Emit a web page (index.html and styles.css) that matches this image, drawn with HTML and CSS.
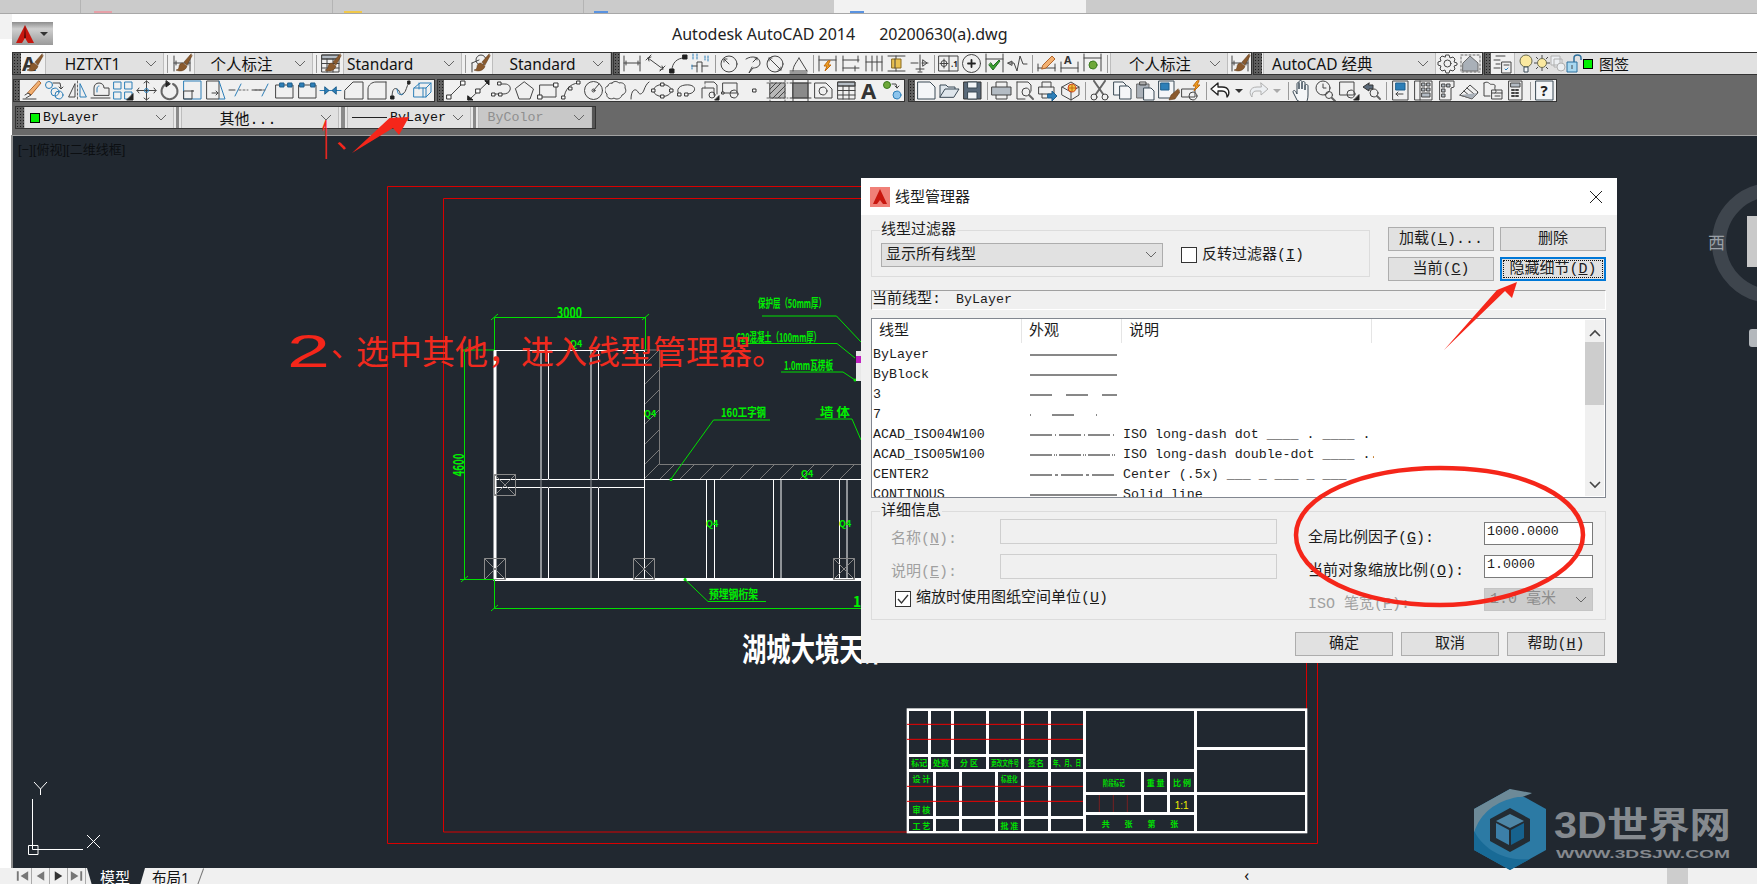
FILE: index.html
```html
<!DOCTYPE html>
<html lang="zh">
<head>
<meta charset="utf-8">
<title>Autodesk AutoCAD 2014</title>
<link rel="stylesheet" href="styles.css">
</head>
<body>
<svg class="defs" aria-hidden="true">
  <symbol id="brush" viewBox="0 0 23 21"><path class="brn" d="M21 1l-7 8 3 3 5-9zM13 10c-3 0-4 2-4 4s-2 3-3 3c4 2 10 1 11-4z"/></symbol>
  <symbol id="chev" viewBox="0 0 12 8"><path d="M1 1l5 5 5-5"/></symbol>
  <symbol id="dl" viewBox="0 0 23 21"><path d="M4 3v15M20 3v15M4 10h16M6 8v4M18 8v4"/></symbol>
  <symbol id="da" viewBox="0 0 23 21"><path d="M8 2L3 7M22 13l-5 5M5 5l15 11M8 4l-3 1 1 3M17 17l3-1-1-3"/></symbol>
  <symbol id="dr" viewBox="0 0 23 21"><path d="M6 17C6 10 11 5 18 5"/><path class="fk" d="M4 16h4v4H4zM17 2h4v4h-4z"/></symbol>
  <symbol id="do" viewBox="0 0 23 21"><path d="M8 19V9h5v10M13 13h6M8 13H3"/><path class="blu" d="M4 1v6M8 1v6M3 12v4M19 3v6M16 3v4" stroke-dasharray="2 1"/></symbol>
  <symbol id="dc1" viewBox="0 0 23 21"><circle cx="11" cy="11" r="8"/><path d="M11 11L6 6M6 9V6h3"/></symbol>
  <symbol id="dc2" viewBox="0 0 23 21"><path d="M5 6c6-4 14-2 14 4 0 3-3 5-7 5l-4 5 3-6"/><path d="M12 9l4-4M14 5h2v2"/></symbol>
  <symbol id="dc3" viewBox="0 0 23 21"><circle cx="11" cy="11" r="8"/><path d="M5 5l12 12M5 8V5h3M17 14v3h-3"/></symbol>
  <symbol id="dc4" viewBox="0 0 23 21"><path d="M3 18h17M6 18c0-5 3-8 6-13M12 5l8 13M3 20h17"/></symbol>
  <symbol id="dq" viewBox="0 0 23 21"><path d="M3 3v15M20 3v15M3 7h17"/><path class="org" d="M12 8l-4 5h3l-2 5 6-6h-3l2-4z"/></symbol>
  <symbol id="db" viewBox="0 0 23 21"><path d="M4 3v15M4 7h16M4 15h16M19 3v6M16 13v5"/></symbol>
  <symbol id="dc" viewBox="0 0 23 21"><path d="M4 3v15M10 3v15M15 3v15M20 3v15M4 9h16"/></symbol>
  <symbol id="ds" viewBox="0 0 23 21"><path d="M3 3h17M3 18h17M11 3v15"/><path class="ylw" d="M7 6h9v9H7z"/><path d="M10 6v9"/></symbol>
  <symbol id="dk" viewBox="0 0 23 21"><path d="M12 2v16M3 10h7M14 10h6M15 7l4 3-4 3zM8 16h8M10 19h4"/></symbol>
  <symbol id="tol" viewBox="0 0 23 21"><path d="M2 3h19v15H2zM12 3v15"/><circle cx="7" cy="10.5" r="3"/><path d="M7 6v9M3 10.500h8"/><text class="tiny" x="14" y="14">.1</text></symbol>
  <symbol id="cen" viewBox="0 0 23 21"><circle cx="11.500" cy="10.500" r="9"/><path class="thk" d="M11.500 7v7M8 10.500h7"/></symbol>
  <symbol id="ins" viewBox="0 0 23 21"><path d="M3 1v18M20 1v18M3 6h17"/><path class="grn" d="M6 12l4 5 7-9-1-1-6 6-2-3z"/></symbol>
  <symbol id="jog" viewBox="0 0 23 21"><path d="M2 10h6l3 8 3-15 3 8h4M2 10l4-2v4z"/></symbol>
  <symbol id="ded" viewBox="0 0 23 21"><path d="M3 11v7M20 11v7M3 15h17"/><path class="org2" d="M8 12l9-9 3 3-9 9-4 1z"/></symbol>
  <symbol id="dtx" viewBox="0 0 23 21"><text class="mid" x="6" y="11">A</text><path d="M3 9v10M20 9v10M3 15h17"/></symbol>
  <symbol id="dup" viewBox="0 0 23 21"><path d="M3 1v17M20 1v17M3 5h17"/><circle class="grnl" cx="12" cy="12" r="4"/></symbol>
  <symbol id="gear" viewBox="0 0 23 21"><circle cx="11.500" cy="10.500" r="3.500"/><path d="M10 2h3l1 3 3-1 2 2-1 3 3 1v2l-3 1 1 3-2 2-3-1-1 3h-3l-1-3-3 1-2-2 1-3-3-1V9l3-1-1-3 2-2 3 1z"/></symbol>
  <symbol id="house" viewBox="0 0 23 21"><path class="dash" d="M2 2h19v17H2z"/><path class="gry" d="M4 10l7-7 8 7v8H4z"/></symbol>
  <symbol id="wsp" viewBox="0 0 23 21"><path d="M11 9h9v11h-9zM13 12h5M5 3h9M3 7h6M5 11h4M3 15h6"/><path class="blu" d="M17 15l-2 2-1-1"/></symbol>

  <symbol id="ed" viewBox="0 0 23 21"><path class="org2" d="M19 1l2 2-10 12-3-2z"/><path d="M3 19h13M5 15l3-2 3 2-5 3"/></symbol>
  <symbol id="cp" viewBox="0 0 23 21"><circle class="blu" cx="6" cy="5" r="3.500"/><circle class="blu" cx="16" cy="15" r="4"/><circle cx="12" cy="12" r="4" class="blu"/><path d="M10 3h7l1 5M16 7l2 2 2-2"/></symbol>
  <symbol id="mi" viewBox="0 0 23 21"><path d="M11.500 1v19" class="dash"/><path d="M9 4v13H3z"/><path class="blu" d="M14 4v13h6z"/></symbol>
  <symbol id="of" viewBox="0 0 23 21"><path d="M5 15V8c0-3 2-5 5-5s5 2 5 5h5v7z"/><path class="blu" d="M8 12V9c0-2 1-3 2-3"/><path d="M2 18h19"/></symbol>
  <symbol id="ar" viewBox="0 0 23 21"><path class="blu" d="M2 2h7v7H2zM13 2h7v7h-7zM2 12h7v7H2zM13 12h7v7h-7z"/><path class="fk" d="M21 14v6h-6z"/></symbol>
  <symbol id="mv" viewBox="0 0 23 21"><path d="M11.500 1v19M2 10.500h19M9 3l2.500-2L14 3M9 18l2.500 2 2.500-2M4 8l-2 2.500L4 13M19 8l2 2.500L19 13"/><circle class="blu" cx="11.500" cy="10.500" r="2"/></symbol>
  <symbol id="ro" viewBox="0 0 23 21"><path class="thk2" d="M15 4a8 8 0 1 1-7 0"/><path class="fk" d="M8 1v6l4-3z"/></symbol>
  <symbol id="sc" viewBox="0 0 23 21"><path class="blu" d="M3 1h17v18H3z"/><path d="M3 11h8v8H3z"/><path class="thk2" d="M11 11h1"/></symbol>
  <symbol id="st" viewBox="0 0 23 21"><path d="M3 1h12v18H3z"/><path class="blu" d="M15 1l6 18h-6"/><path d="M8 13h6M12 11l2 2-2 2"/></symbol>
  <symbol id="tr" viewBox="0 0 23 21"><path class="blu" d="M8 16L14 4"/><path d="M2 10h6"/><path class="dash" d="M12 10h9"/></symbol>
  <symbol id="ex" viewBox="0 0 23 21"><path class="blu" d="M12 16L18 4"/><path d="M12 10H2"/><path class="dash" d="M5 10h11"/></symbol>
  <symbol id="bp" viewBox="0 0 23 21"><path d="M3 5h17v13H3z"/><path class="bluf" d="M7 3h4v4H7zM15 3h4v4h-4z"/></symbol>
  <symbol id="bb" viewBox="0 0 23 21"><path d="M3 5h17v13H3z"/><path class="bluf" d="M4 3h4v4H4zM15 3h4v4h-4z"/></symbol>
  <symbol id="jn" viewBox="0 0 23 21"><path class="blu" d="M1 10.500h21"/><path class="bluf" d="M6 7l4 3.500L6 14zM17 7l-4 3.500 4 3.500z"/></symbol>
  <symbol id="ch" viewBox="0 0 23 21"><path d="M3 19h18V2H11L3 10z"/></symbol>
  <symbol id="fl" viewBox="0 0 23 21"><path d="M3 19V9c0-4 4-7 8-7h10"/><path d="M3 19h18V2"/></symbol>
  <symbol id="bl" viewBox="0 0 23 21"><path d="M4 18c0-6 1-11 5-9s2 8 6 5 3-8 6-11"/><path class="blu" d="M9 9c1 3 0 7 6 5"/><path class="fk" d="M3 16h3v3H3zM20 1h2v3h-2z"/></symbol>
  <symbol id="xp" viewBox="0 0 23 21"><path class="blu" d="M3 8l6-5h11v9l-5 5H3zM3 8h12v9M15 8l5-5M8 3v6M12 8v9"/></symbol>

  <symbol id="ln" viewBox="0 0 23 21"><path d="M5 17L19 3"/><path class="wb" d="M3 15h4v4H3zM17 1h4v4h-4z"/></symbol>
  <symbol id="xl" viewBox="0 0 23 21"><path d="M3 19L21 2M2 20l2-2M21 1l-2 2"/><path class="wb" d="M9 9h4v4H9z"/><path class="fk" d="M1 16l5 4-5 0zM22 0v5l-4-4z"/></symbol>
  <symbol id="pl" viewBox="0 0 23 21"><path d="M11 4h4c4 0 6 3 5 6s-4 4-7 4H5"/><path class="wb" d="M8 2h3v3H8zM2 13h3v3H2zM9 13h3v3H9z"/></symbol>
  <symbol id="pg" viewBox="0 0 23 21"><path d="M11.500 2l9 7-3.500 10H6L2.500 9z"/></symbol>
  <symbol id="rc" viewBox="0 0 23 21"><path d="M4 5h16v12H4z"/><path class="wb" d="M2 15h4v4H2zM18 3h4v4h-4z"/></symbol>
  <symbol id="ac" viewBox="0 0 23 21"><path d="M5 18C6 9 11 4 19 3"/><path class="wb" d="M3 16h3v3H3zM10 7h3v3h-3zM18 1h3v3h-3z"/></symbol>
  <symbol id="ci" viewBox="0 0 23 21"><circle cx="11.500" cy="10.500" r="9"/><circle cx="11.500" cy="10.500" r="1.500"/><path d="M11.500 10.500L17 4"/></symbol>
  <symbol id="cl" viewBox="0 0 23 21"><path d="M7 3c3-3 6-1 7 0 3-1 7 1 6 5 2 3 0 6-3 7-1 4-6 5-8 3-3 2-8 0-7-4-3-2-3-7 1-8 0-2 2-3 4-3z"/></symbol>
  <symbol id="sp" viewBox="0 0 23 21"><path d="M3 19C3 9 8 8 10 12s5 1 6-2 3-7 5-8"/></symbol>
  <symbol id="el" viewBox="0 0 23 21"><ellipse cx="11.500" cy="10.500" rx="9" ry="6"/><path class="wb" d="M1 9h3v3H1zM19 9h3v3h-3zM10 3h3v3h-3zM10 15h3v3h-3z"/></symbol>
  <symbol id="ea" viewBox="0 0 23 21"><path d="M6 15C2 12 3 6 11 5s11 3 9 6-6 3-8 3"/><path class="wb" d="M4 13h3v3H4zM11 13h3v3h-3z"/></symbol>
  <symbol id="ib" viewBox="0 0 23 21"><path d="M8 2h9l3 3v9M5 18V8h12v7"/><path class="dash" d="M8 2v6"/><circle cx="15" cy="15" r="3"/><path class="fk" d="M18 20h4v-4z"/></symbol>
  <symbol id="mb" viewBox="0 0 23 21"><path d="M3 3h14v10H3z"/><circle cx="14" cy="14" r="4"/><path class="wb" d="M2 12h2v2H2z"/></symbol>
  <symbol id="pt" viewBox="0 0 23 21"><path class="wb" d="M10 9h3v3h-3z"/></symbol>
  <symbol id="ht" viewBox="0 0 23 21"><path class="hat" d="M4 3h15v15H4z"/><path class="dash" d="M1 3h21M1 18h21M4 0v21M19 0v21"/><path d="M4 9l6-6M4 14l11-11M7 18L19 6M12 18l7-7"/></symbol>
  <symbol id="gr" viewBox="0 0 23 21"><path class="grd" d="M4 3h15v15H4z"/><path d="M1 3h21M1 18h21M4 0v21M19 0v21"/></symbol>
  <symbol id="rg" viewBox="0 0 23 21"><path d="M3 3h11l6 6v9H3z"/><circle cx="11" cy="11" r="4"/></symbol>
  <symbol id="tb" viewBox="0 0 23 21"><path class="hd" d="M3 2h17v4H3z"/><path d="M3 2h17v17H3zM3 6h17M3 10.500h17M3 15h17M8 6v13M14 6v13"/></symbol>
  <symbol id="mt" viewBox="0 0 23 21"><text class="big" x="3" y="19">A</text></symbol>
  <symbol id="ao" viewBox="0 0 23 21"><circle class="grnl" cx="6" cy="5" r="3.500"/><circle class="bluc" cx="16" cy="15" r="4"/><path d="M11 4h4l1 4M14 6l2 2 2-2"/></symbol>

  <symbol id="nw" viewBox="0 0 23 21"><path class="wbl" d="M3 2h12l5 5v12H3z"/></symbol>
  <symbol id="op" viewBox="0 0 23 21"><path class="fldr" d="M2 17V5h6l2 2h7v3"/><path class="fldr" d="M2 17l5-8h14l-5 8z"/></symbol>
  <symbol id="sv" viewBox="0 0 23 21"><path class="slate" d="M3 2h17v17H3z"/><path class="wbl" d="M7 2h9v6H7zM7 12h9v7H7z"/></symbol>
  <symbol id="pr" viewBox="0 0 23 21"><path d="M6 7V2h11v5M6 15v4h11v-4"/><path class="hd" d="M2 7h19v8H2z"/></symbol>
  <symbol id="pv" viewBox="0 0 23 21"><path d="M4 2h11l3 3v6M4 2v17h8"/><circle cx="13" cy="12" r="4"/><path class="thk2" d="M16 15l4 4"/></symbol>
  <symbol id="pb" viewBox="0 0 23 21"><path d="M6 7V2h9v5M3 7h15v7H3zM6 14v4h5"/><path class="bluf" d="M12 14h4v-3l5 5-5 5v-3h-4z"/></symbol>
  <symbol id="td" viewBox="0 0 23 21"><path d="M3 7l9-5 8 5v8l-8 5-9-5zM12 20v-8M3 7l9 5 8-5"/><circle class="ylws" cx="13" cy="8" r="4"/><path class="org" d="M13 5v6M10 8h6"/></symbol>
  <symbol id="ct" viewBox="0 0 23 21"><path class="thk2" d="M6 1l9 13M17 1L8 14"/><circle cx="6" cy="17" r="3"/><circle cx="17" cy="17" r="3"/></symbol>
  <symbol id="cy" viewBox="0 0 23 21"><path class="wbl" d="M3 2h9l3 3v10H3z"/><path class="wbl" d="M9 6h8l3 3v10H9z"/></symbol>
  <symbol id="pa" viewBox="0 0 23 21"><path class="gry" d="M3 4h12v14H3z"/><path d="M6 2h6v3H6z"/><path class="wbl" d="M10 8h7l3 3v9H10z"/></symbol>
  <symbol id="mp" viewBox="0 0 23 21"><path class="wbl" d="M2 1h15v17H2z"/><path class="bluf" d="M4 3h8v7H4z"/><path class="brn" d="M21 9l-7 6-2 5 6-1 5-7z"/></symbol>
  <symbol id="be" viewBox="0 0 23 21"><path d="M2 9h13v8H2z"/><circle cx="13" cy="16" r="4"/><path class="org" d="M17 1l-4 5h3l-2 5 6-6h-3l2-4z"/></symbol>
  <symbol id="ud" viewBox="0 0 23 21"><path class="thk1" d="M9 3L2 9l7 6v-4h4c3 0 5 1 5 6 3-3 3-10-5-10H9z"/></symbol>
  <symbol id="rd" viewBox="0 0 23 21"><path class="pale" d="M14 3l7 6-7 6v-4h-4c-3 0-5 1-5 6-3-3-3-10 5-10h4z"/></symbol>
  <symbol id="pn" viewBox="0 0 23 21"><path class="wbl" d="M6 20L2 12c0-2 2-2 3 0l1 2V4c0-2 2-2 2 0v5-7c0-2 3-2 3 0v7-6c0-2 3-2 3 0v7-4c0-2 3-2 3 0v9c0 4-1 7-3 9z"/></symbol>
  <symbol id="zr" viewBox="0 0 23 21"><circle cx="9" cy="8" r="7"/><path d="M9 4v4h3M13 13l-2 2"/><circle cx="15" cy="15" r="3.500"/><path class="thk2" d="M18 18l3 3"/></symbol>
  <symbol id="zw" viewBox="0 0 23 21"><path d="M3 2h14v13H3z"/><circle cx="14" cy="14" r="4"/><path class="fk" d="M17 20h5v-5z"/></symbol>
  <symbol id="zp" viewBox="0 0 23 21"><path class="slate" d="M9 3L3 7l6 4V9h4V5H9z"/><circle cx="14" cy="13" r="4"/><path class="thk2" d="M17 16l3 3"/></symbol>
  <symbol id="pp" viewBox="0 0 23 21"><path d="M4 1h15v19H4z"/><path class="bluf" d="M7 3h9v7H7z"/><path d="M14 14H7M9 12l-2 2 2 2"/></symbol>
  <symbol id="dgn" viewBox="0 0 23 21"><path d="M3 1h17v19H3zM8 1v19"/><path class="hd" d="M10 3h3v3h-3zM15 3h3v3h-3zM10 8h3v3h-3zM15 8h3v3h-3zM10 13h8v4h-8z"/></symbol>
  <symbol id="tp" viewBox="0 0 23 21"><path d="M5 1h14v6l-3 1v12H5z"/><path class="hd" d="M7 4h3v3H7zM12 4h3v3h-3zM7 9h3v3H7zM7 14h3v3H7z"/></symbol>
  <symbol id="ss" viewBox="0 0 23 21"><path d="M2 15L12 5l8 7-6 6zM6 11l7 6M9 8l7 6"/><path class="gry" d="M2 15l12 4 6-6"/></symbol>
  <symbol id="mk" viewBox="0 0 23 21"><path d="M3 3c3-2 5 0 6 1s6-1 5 3 3 3 0 6M3 3v13h6"/><path d="M11 10h10v9H11zM11 13h10M14 16h5"/></symbol>
  <symbol id="cc" viewBox="0 0 23 21"><path d="M5 1h13v19H5z"/><path class="hd" d="M7 3h9v4H7z"/><path class="dashb" d="M8 10h8M8 13h8M8 16h8"/></symbol>
  <symbol id="hp" viewBox="0 0 23 21"><path class="wbl" d="M3 1h17v19H3z"/><text class="q" x="7.500" y="16">?</text></symbol>

  <symbol id="bulb" viewBox="0 0 16 21"><circle class="ylwl" cx="8" cy="8" r="6"/><path class="wbl" d="M6 14h4v5H6z"/></symbol>
  <symbol id="sun" viewBox="0 0 16 21"><circle class="ylwl" cx="8" cy="10" r="4.500"/><path d="M8 2v3M8 15v3M0 10h3M13 10h3M2 4l2 2M12 14l2 2M14 4l-2 2M2 16l2-2"/></symbol>
  <symbol id="fz" viewBox="0 0 16 21"><path class="pale" d="M1 3h9v9H1zM4 6h8v8H4z"/><circle class="pale" cx="11" cy="14" r="4"/></symbol>
  <symbol id="lock" viewBox="0 0 16 21"><path class="lkb" d="M1 9h10v10H1z"/><path class="blu2" d="M8 9V5c0-4 7-4 7 0v2"/><path d="M6 12v4"/></symbol>
</svg>

<div class="strip">
  <div class="tab t1"><i class="favi pink"></i><span>搜索结果</span></div>
  <div class="tab t2"><i class="favi gold"></i><span>【帖子】线型比例设置方法</span></div>
  <div class="tab t3"><i class="favi sky"></i><span>全局比例因子怎么设置</span></div>
  <div class="tab t4 on"><i class="favi sky"></i><span>如何设置全局比例因子</span></div>
</div>

<div class="app">
  <header class="titlebar">
    <button class="appbtn" type="button">
      <svg class="applogo" viewBox="0 0 20 20"><path class="logo-a" d="M10 1L1 19h6l3-5 3 5h6z"/><path class="logo-b" d="M10 1l-1 13h2z"/></svg>
      <i class="caret"></i>
    </button>
    <div class="apptitle"><span>Autodesk AutoCAD 2014</span><span>20200630(a).dwg</span></div>
  </header>

  <div class="bars">
    <div class="row">
      <div class="tbar first">
        <i class="grip wide"></i>
        <svg class="ic"><text class="big dk" x="1" y="18">A</text><use href="#brush"/></svg>
        <div class="combo w119 left1"><span class="ctr">HZTXT1</span><svg class="chev"><use href="#chev"/></svg></div>
        <i class="sep"></i>
        <svg class="ic"><use href="#dl" /><use href="#brush"/></svg>
        <div class="combo w119 left1"><span class="ctr">个人标注</span><svg class="chev"><use href="#chev"/></svg></div>
        <i class="sep"></i>
        <svg class="ic"><use href="#tb"/><use href="#brush"/></svg>
        <div class="combo w119 left1"><span class="lft">Standard</span><svg class="chev"><use href="#chev"/></svg></div>
        <i class="sep"></i>
        <svg class="ic"><circle cx="13" cy="7" r="5"/><path d="M4 10l7-3M4 10v9"/><use href="#brush"/></svg>
        <div class="combo w119 left1"><span class="ctr r0">Standard</span><svg class="chev"><use href="#chev"/></svg></div>
      </div>
      <div class="tbar">
        <i class="grip"></i>
        <svg class="ic"><use href="#dl"/></svg><svg class="ic"><use href="#da"/></svg><svg class="ic"><use href="#dr"/></svg><svg class="ic"><use href="#do"/></svg>
        <i class="sep"></i>
        <svg class="ic"><use href="#dc1"/></svg><svg class="ic"><use href="#dc2"/></svg><svg class="ic"><use href="#dc3"/></svg><svg class="ic"><use href="#dc4"/></svg>
        <i class="sep"></i>
        <svg class="ic"><use href="#dq"/></svg><svg class="ic"><use href="#db"/></svg><svg class="ic"><use href="#dc"/></svg><svg class="ic"><use href="#ds"/></svg><svg class="ic"><use href="#dk"/></svg>
        <i class="sep"></i>
        <svg class="ic"><use href="#tol"/></svg><svg class="ic"><use href="#cen"/></svg><svg class="ic"><use href="#ins"/></svg><svg class="ic"><use href="#jog"/></svg>
        <i class="sep"></i>
        <svg class="ic"><use href="#ded"/></svg><svg class="ic"><use href="#dtx"/></svg><svg class="ic"><use href="#dup"/></svg>
        <i class="sep"></i>
        <div class="combo w118"><span class="ctr r0">个人标注</span><svg class="chev"><use href="#chev"/></svg></div>
        <svg class="ic"><use href="#dl"/><use href="#brush"/></svg>
      </div>
      <div class="tbar">
        <i class="grip wide"></i>
        <div class="combo w173 left1"><span class="lft wk">AutoCAD 经典</span><svg class="chev"><use href="#chev"/></svg></div>
        <svg class="ic"><use href="#gear"/></svg><svg class="ic"><use href="#house"/></svg>
      </div>
      <div class="tbar grow">
        <i class="grip"></i>
        <svg class="ic"><use href="#wsp"/></svg>
        <div class="layer">
          <svg class="ic16"><use href="#bulb"/></svg><svg class="ic16"><use href="#sun"/></svg><svg class="ic16"><use href="#fz"/></svg><svg class="ic16"><use href="#lock"/></svg>
          <i class="swatch"></i><span class="layname">图签</span>
        </div>
      </div>
    </div>

    <div class="row r2">
      <div class="tbar">
        <i class="grip"></i>
        <svg class="ic"><use href="#ed"/></svg><svg class="ic"><use href="#cp"/></svg><svg class="ic"><use href="#mi"/></svg><svg class="ic"><use href="#of"/></svg><svg class="ic"><use href="#ar"/></svg><svg class="ic"><use href="#mv"/></svg><svg class="ic"><use href="#ro"/></svg><svg class="ic"><use href="#sc"/></svg><svg class="ic"><use href="#st"/></svg><svg class="ic"><use href="#tr"/></svg><svg class="ic"><use href="#ex"/></svg><svg class="ic"><use href="#bp"/></svg><svg class="ic"><use href="#bb"/></svg><svg class="ic"><use href="#jn"/></svg><svg class="ic"><use href="#ch"/></svg><svg class="ic"><use href="#fl"/></svg><svg class="ic"><use href="#bl"/></svg><svg class="ic"><use href="#xp"/></svg>
      </div>
      <div class="tbar gap2">
        <i class="grip"></i>
        <svg class="ic"><use href="#ln"/></svg><svg class="ic"><use href="#xl"/></svg><svg class="ic"><use href="#pl"/></svg><svg class="ic"><use href="#pg"/></svg><svg class="ic"><use href="#rc"/></svg><svg class="ic"><use href="#ac"/></svg><svg class="ic"><use href="#ci"/></svg><svg class="ic"><use href="#cl"/></svg><svg class="ic"><use href="#sp"/></svg><svg class="ic"><use href="#el"/></svg><svg class="ic"><use href="#ea"/></svg><svg class="ic"><use href="#ib"/></svg><svg class="ic"><use href="#mb"/></svg><svg class="ic"><use href="#pt"/></svg><svg class="ic"><use href="#ht"/></svg><svg class="ic"><use href="#gr"/></svg><svg class="ic"><use href="#rg"/></svg><svg class="ic"><use href="#tb"/></svg><svg class="ic"><use href="#mt"/></svg><svg class="ic"><use href="#ao"/></svg>
      </div>
      <div class="tbar gap3">
        <i class="grip"></i>
        <svg class="ic"><use href="#nw"/></svg><svg class="ic"><use href="#op"/></svg><svg class="ic"><use href="#sv"/></svg>
        <i class="sep"></i>
        <svg class="ic"><use href="#pr"/></svg><svg class="ic"><use href="#pv"/></svg><svg class="ic"><use href="#pb"/></svg><svg class="ic"><use href="#td"/></svg>
        <i class="sep"></i>
        <svg class="ic"><use href="#ct"/></svg><svg class="ic"><use href="#cy"/></svg><svg class="ic"><use href="#pa"/></svg><svg class="ic"><use href="#mp"/></svg><svg class="ic"><use href="#be"/></svg>
        <i class="sep"></i>
        <svg class="ic"><use href="#ud"/></svg><i class="dd"></i><svg class="ic"><use href="#rd"/></svg><i class="dd off"></i>
        <i class="sep"></i>
        <svg class="ic"><use href="#pn"/></svg><svg class="ic"><use href="#zr"/></svg><svg class="ic"><use href="#zw"/></svg><svg class="ic"><use href="#zp"/></svg>
        <i class="sep"></i>
        <svg class="ic"><use href="#pp"/></svg><svg class="ic"><use href="#dgn"/></svg><svg class="ic"><use href="#tp"/></svg><svg class="ic"><use href="#ss"/></svg><svg class="ic"><use href="#mk"/></svg><svg class="ic"><use href="#cc"/></svg>
        <i class="sep"></i>
        <svg class="ic"><use href="#hp"/></svg>
      </div>
    </div>

    <div class="row r3">
      <div class="tbar props">
        <i class="grip wide2"></i>
        <div class="combo mono w150"><i class="swatch sw2"></i><span class="lft tight">ByLayer</span><svg class="chev"><use href="#chev"/></svg></div>
        <i class="pgap g7"></i>
        <div class="combo mono w158"><span class="ctr cjk15">其他...</span><svg class="chev"><use href="#chev"/></svg></div>
        <i class="pgap g8"></i>
        <div class="combo mono w123"><i class="lwline"></i><span class="lft">ByLayer</span><svg class="chev"><use href="#chev"/></svg></div>
        <i class="pgap g7"></i>
        <div class="combo mono w114 dis"><span class="lft pad9">ByColor</span><svg class="chev"><use href="#chev"/></svg></div>
      </div>
    </div>
  </div>

  <main class="canvas">
    <div class="viewlabel">[−][俯视][二维线框]</div>
    <svg class="drawing" viewBox="13 136 1744 732">
      <g class="red1">
        <path d="M387.500 186.500H1317.500V843.500H387.500z"/>
        <path d="M443.500 198.500H1306.500V832H443.500z"/>
      </g>
      <g class="hatch">
        <path d="M659.500 350V464.500H861M644 350h15.500"/>
        <path d="M644 365l15-15M644 385l15-15M644 405l15-15M644 425l15-15M644 445l15-15M644 465l15-15M644 479l15-15M660 479l15-15M680 479l15-15M700 479l15-15M720 479l15-15M740 479l15-15M760 479l15-15M780 479l15-15M800 479l15-15M820 479l15-15M840 479l15-15"/>
      </g>
      <g class="wht">
        <path d="M494 350.500H644.500V579M541 350V579M548.500 350V579M591 350V579M598.500 350V579M644 479.500H861M494 479.500h150M494 487.500H644M706.500 479V579M714.500 479V579M773.500 479V579M781 479V579M839.500 479V579M847 479V579"/>
      </g>
      <path class="wht3" d="M495 350V579.500H861"/>
      <path class="wht-mask" d="M541 479.500v8M548.500 479.500v8M591 479.500v8M598.500 479.500v8"/>
      <g class="col">
        <path d="M494.500 474.500H515.500V495.500H494.500zM494.500 474.500l21 21M515.500 474.500l-21 21"/>
        <path d="M484.500 558.500H505.500V579.500H484.500zM484.500 558.500l21 21M505.500 558.500l-21 21"/>
        <path d="M633.500 558.500H654.500V579.500H633.500zM633.500 558.500l21 21M654.500 558.500l-21 21"/>
        <path d="M833.500 558.500H854.500V579.500H833.500zM833.500 558.500l21 21M854.500 558.500l-21 21"/>
      </g>
      <g class="grn-l">
        <path d="M494.500 317.500H645.500M494.500 317.500V350M645.500 317V350M491 320l7-6M642 320l7-6"/>
        <path d="M464.500 350V579M460 350h34M460 579.500h34M461 353l7-6M461 582l7-6"/>
        <path d="M494.500 580V608.500H861M491 611l7-6"/>
        <path d="M762 316H836.500L861 342M742 343.500H837L855 358M781 372H843L855 380M713.500 420H770M713.500 420L671 479M815.500 419H852L861 440M708 601.500H766M708 601.500L685 579.500"/>
      </g>
      <path class="dots" d="M671 479.500h.1M685 579.500h.1M855 380h.1"/>
      <rect class="strip-w" x="856" y="351" width="5" height="30"/>
      <rect class="strip-m" x="856" y="356" width="5" height="7"/>
      <g class="lab">
        <text x="557" y="318" class="l14" textLength="25" lengthAdjust="spacingAndGlyphs">3000</text>
        <text class="l14" text-anchor="middle" transform="translate(464 465) rotate(-90) scale(.7 1)">4600</text>
        <text x="758" y="308" textLength="68" lengthAdjust="spacingAndGlyphs">保护层（50mm厚）</text>
        <text x="736" y="342" textLength="85" lengthAdjust="spacingAndGlyphs">C20混凝土（100mm厚）</text>
        <text x="784" y="370" textLength="49" lengthAdjust="spacingAndGlyphs">1.0mm瓦楞板</text>
        <text x="721" y="417" textLength="45" lengthAdjust="spacingAndGlyphs">160工字钢</text>
        <text x="820" y="417" textLength="30" lengthAdjust="spacingAndGlyphs">墙 体</text>
        <text x="709" y="599" textLength="49" lengthAdjust="spacingAndGlyphs">预埋钢桁架</text>
        <text x="570" y="347" class="s">Q4</text>
        <text x="801" y="477" class="s">Q4</text>
        <text x="706" y="527" class="s">Q4</text>
        <text x="839" y="527" class="s">Q4</text>
        <text class="s" transform="translate(644 417)">Q4</text>
        <text x="853" y="607" class="l14">1</text>
      </g>
      <text class="bigtitle" x="742" y="661" textLength="146" lengthAdjust="spacingAndGlyphs">湖城大境天第</text>

      <g transform="translate(880 690) scale(.33333)">
        <rect class="tb-w" x="80" y="55" width="1202" height="375"/>
        <path class="tb-c" d="M87 63H144V192H87zM153 63H213V192H153zM222 63H318V192H222zM327 63H423V192H327zM432 63H504V192H432zM513 63H609V192H513zM87 201H144V237H87zM153 201H213V237H153zM222 201H318V237H222zM327 201H423V237H327zM432 201H504V237H432zM513 201H609V237H513zM618 63H942V237H618zM87 246H159V378H87zM168 246H237V378H168zM246 246H345V378H246zM354 246H423V378H354zM432 246H504V378H432zM513 246H609V378H513zM87 387H159V423H87zM168 387H237V423H168zM246 387H345V423H246zM354 387H423V423H354zM432 387H504V423H432zM513 387H609V423H513zM618 246H783V306H618zM792 246H861V306H792zM870 246H942V306H870zM618 315H783V366H618zM792 315H861V366H792zM870 315H942V366H870zM618 375H942V423H618zM951 63H1275V171H951zM951 180H1275V306H951zM951 315H1275V423H951z"/>
        <path class="tb-r" d="M81 103H609M81 148H609M81 289H609M81 334H609"/>
        <path class="tb-d" d="M658 315V366M700 315V366M742 315V366"/>
        <g class="tb-t">
          <text x="118" y="228">标记</text><text x="183" y="228">处数</text><text x="267" y="228">分 区</text><text x="375" y="228" textLength="84" lengthAdjust="spacingAndGlyphs">更改文件号</text><text x="468" y="228">签名</text><text x="561" y="228" textLength="84" lengthAdjust="spacingAndGlyphs">年、月、日</text>
          <text x="124" y="276">设 计</text><text x="388" y="276" textLength="50" lengthAdjust="spacingAndGlyphs">标准化</text><text x="124" y="370">审 核</text><text x="124" y="416">工 艺</text><text x="388" y="416">批 准</text>
          <text x="701" y="287" textLength="66" lengthAdjust="spacingAndGlyphs">阶段标记</text><text x="827" y="287">重 量</text><text x="906" y="287">比 例</text>
          <text x="780" y="410" textLength="230">共  张  第  张</text>
        </g>
        <text class="tb-y" x="905" y="356">1:1</text>
      </g>

      <g class="ucs">
        <path d="M32.500 799V845M38 849.500H83M28.500 845.500H38V854.500H28.500zM32.500 845.500V849.500H38"/>
        <path d="M87 835l13 13M100 835l-13 13M34 782l6.500 7 6.500-7M40.500 789v6"/>
      </g>

      <circle class="ring" cx="1772" cy="243" r="53"/>
      <rect class="cube" x="1747" y="216" width="10" height="51"/>
      <text class="west" x="1708" y="249">西</text>
      <rect class="wcs" x="1749" y="329" width="12" height="18" rx="3"/>
    </svg>

    <section class="dialog" aria-label="线型管理器">
      <div class="dlg-title">
        <svg class="dlg-logo" viewBox="0 0 20 20"><rect class="logo-bg" width="20" height="20"/><path class="logo-a" d="M10 2L3 17h4l3-4 3 4h4z"/></svg>
        <span class="dlg-name">线型管理器</span>
        <svg class="dlg-x" viewBox="0 0 14 14"><path d="M1 1l12 12M13 1L1 13"/></svg>
      </div>
      <div class="dlg-body">
        <div class="top">
          <div class="group filter">
            <span class="legend">线型过滤器</span>
            <div class="select"><span>显示所有线型</span><svg class="chev"><use href="#chev"/></svg></div>
            <i class="check"></i><span class="chk-label">反转过滤器(<u>I</u>)</span>
          </div>
          <div class="btn-grid">
            <button class="btn" type="button">加载(<u>L</u>)...</button>
            <button class="btn" type="button">删除</button>
            <button class="btn" type="button">当前(<u>C</u>)</button>
            <button class="btn focus" type="button"><span>隐藏细节(<u>D</u>)</span></button>
          </div>
        </div>
        <div class="current"><span class="cj">当前线型:</span><span class="cv">ByLayer</span></div>
        <div class="list">
          <div class="list-main">
            <div class="lhead"><span class="h1">线型</span><span class="h2">外观</span><span class="h3">说明</span><span class="h4"></span></div>
            <div class="lrow"><span class="n">ByLayer</span><svg class="ls"><path d="M0 2h87"/></svg></div>
            <div class="lrow"><span class="n">ByBlock</span><svg class="ls"><path d="M0 2h87"/></svg></div>
            <div class="lrow"><span class="n">3</span><svg class="ls"><path class="d3" d="M0 2h87"/></svg></div>
            <div class="lrow"><span class="n">7</span><svg class="ls"><path class="d7" d="M0 2h87"/></svg></div>
            <div class="lrow"><span class="n">ACAD_ISO04W100</span><svg class="ls"><path class="d4" d="M0 2h87"/></svg><span class="d">ISO long-dash dot ____ . ____ .</span></div>
            <div class="lrow"><span class="n">ACAD_ISO05W100</span><svg class="ls"><path class="d5" d="M0 2h87"/></svg><span class="d">ISO long-dash double-dot ____ ..</span></div>
            <div class="lrow"><span class="n">CENTER2</span><svg class="ls"><path class="dc" d="M0 2h87"/></svg><span class="d">Center (.5x) ___ _ ___ _ ___ _</span></div>
            <div class="lrow"><span class="n">CONTINOUS</span><svg class="ls"><path d="M0 2h87"/></svg><span class="d">Solid line</span></div>
          </div>
          <div class="vscroll">
            <svg class="vs-a" viewBox="0 0 12 8"><path d="M1 7l5-5 5 5"/></svg>
            <i class="vs-t"></i>
            <svg class="vs-a end" viewBox="0 0 12 8"><path d="M1 1l5 5 5-5"/></svg>
          </div>
        </div>
        <div class="group details">
          <span class="legend">详细信息</span>
          <div class="d-left">
            <div class="f f-a"><label class="off">名称(<u>N</u>):</label><i class="inp-dis"></i></div>
            <div class="f f-b"><label class="off">说明(<u>E</u>):</label><i class="inp-dis"></i></div>
            <div class="chk-row"><i class="check on"><svg viewBox="0 0 14 14"><path d="M2 7l3.500 4L12 3"/></svg></i><span>缩放时使用图纸空间单位(<u>U</u>)</span></div>
          </div>
          <div class="d-right">
            <div class="f2"><label>全局比例因子(<u>G</u>):</label><span class="val">1000.0000</span></div>
            <div class="f2"><label>当前对象缩放比例(<u>O</u>):</label><span class="val">1.0000</span></div>
            <div class="f2"><label class="off">ISO 笔宽(<u>P</u>):</label><span class="val dis">1.0 毫米<svg class="chev"><use href="#chev"/></svg></span></div>
          </div>
        </div>
        <div class="foot">
          <button class="btn" type="button">确定</button>
          <button class="btn" type="button">取消</button>
          <button class="btn" type="button">帮助(<u>H</u>)</button>
        </div>
      </div>
    </section>
  </main>

  <footer class="tabbar">
    <div class="nav">
      <svg class="nb" viewBox="0 0 18 16"><path class="nb-d" d="M3 3h2v10H3zM15 3v10L7 8z"/></svg>
      <svg class="nb" viewBox="0 0 18 16"><path class="nb-d" d="M13 3v10L5 8z"/></svg>
      <svg class="nb" viewBox="0 0 18 16"><path class="nb-k" d="M5 3v10l8-5z"/></svg>
      <svg class="nb" viewBox="0 0 18 16"><path class="nb-d" d="M3 3v10l8-5zM13 3h2v10h-2z"/></svg>
    </div>
    <span class="mtab active">模型</span>
    <span class="mtab">布局1</span>
    <i class="tabslash"></i>
    <span class="sb-l">‹</span>
    <i class="sb-t"></i>
  </footer>
</div>

<svg class="overlay" viewBox="0 0 1757 884" aria-hidden="true">
  <path class="mark-f" d="M352 153L389.500 118 409 117 399 135 393 128z"/>
  <text class="hand" x="321" y="159" textLength="9" lengthAdjust="spacingAndGlyphs">1</text>
  <text class="hand-c" x="336" y="148">、</text>
  <path class="mark-f" d="M1444 350L1497 290 1517 282 1512 298 1505 291z"/>
  <text class="note2" x="287" y="367" textLength="43" lengthAdjust="spacingAndGlyphs">2</text>
  <text class="note3" x="331" y="356">、</text>
  <text class="note" x="356" y="364" textLength="429">选中其他，进入线型管理器。</text>
  <path class="mark-s" d="M1296 535C1296 495 1365 468 1440 468 1530 468 1583 500 1583 535 1583 575 1510 605 1440 605 1360 605 1296 575 1296 535z"/>

  <g class="wm">
    <path class="wm-a" d="M1510 789l36 20v41l-36 20-36-20v-41z"/>
    <path class="wm-b" d="M1510 789l-36 20v24c6-20 22-32 44-36 6 0 10-2 14-4z"/>
    <path class="wm-c" d="M1474 850l36 20 20-11c-22 2-44-6-56-28z"/>
    <path class="wm-d" d="M1510 808l20 11v22l-20 11-20-11v-22z"/>
    <path class="wm-e" d="M1510 814l14 7-14 7-14-7z"/>
    <path class="wm-f" d="M1496 823l13 7v15l-13-7z"/>
    <path class="wm-g" d="M1524 823l-13 7v15l13-7z"/>
    <text class="wm-t" x="1554" y="838" textLength="177" lengthAdjust="spacingAndGlyphs">3D世界网</text>
    <text class="wm-u" x="1556" y="858" textLength="174" lengthAdjust="spacingAndGlyphs">WWW.3DSJW.COM</text>
  </g>
</svg>
</body>
</html>
```

FILE: styles.css
```css
* { box-sizing: border-box; }
html, body { margin: 0; padding: 0; }
body {
  position: relative;
  width: 1757px;
  height: 884px;
  overflow: hidden;
  background: linear-gradient(#f2f2f2 39px, #fff 39px);
  font-family: "Noto Sans", "Noto Sans CJK SC", sans-serif;
  color: #111;
}
.defs { position: absolute; width: 0; height: 0; }

/* browser tab strip */
.strip { display: flex; height: 14px; background: #cbcbcb; border-bottom: 1px solid #a8a8a8; overflow: hidden; }
.tab { display: flex; align-items: flex-start; padding-top: 10px; border-left: 1px solid #b4b4b4; font-size: 14px; line-height: 20px; white-space: nowrap; color: #333; overflow: hidden; flex: none; }
.t1 { width: 252px; margin-left: 80px; padding-left: 13px; }
.t2 { width: 251px; padding-left: 11px; }
.t3 { width: 251px; padding-left: 10px; }
.t4 { width: 252px; padding-left: 16px; background: #f2f2f2; border-left: 0; }
.favi { width: 18px; height: 14px; margin: 1px 13px 0 0; flex: none; }
.t3 .favi, .t4 .favi { width: 14px; }
.t4 .favi { margin-right: 5px; }
.t3 .favi { margin-right: 22px; }
.t1 .favi { margin-right: 13px; }
.t2 .favi { margin-right: 21px; }
.pink { background: #e6a0a8; }
.gold { background: #f0c84a; }
.sky { background: #5a93e0; }

.app { margin-left: 12px; display: flex; flex-direction: column; height: 870px; }

/* title bar */
.titlebar { display: flex; height: 38px; background: #fff; flex: none; }
.appbtn { width: 41px; height: 23px; margin: 8px 0 0; padding: 0 0 0 3px; border: 0; background: linear-gradient(#8e8e8e, #cfcfcf 30%, #9a9a9a); display: flex; align-items: center; gap: 5px; }
.applogo { width: 20px; height: 20px; }
.logo-a { fill: #c8170f; }
.logo-b { fill: #5a0b08; }
.logo-bg { fill: #f08078; }
.caret { width: 0; height: 0; border: 4px solid transparent; border-top: 4px solid #333; border-bottom: 0; }
.apptitle { margin: 9px 0 0 619px; font-size: 16px; line-height: 22px; display: flex; gap: 24px; color: #222; }

/* toolbars */
.bars { background: #696969; flex: none; height: 83px; padding-bottom: 6px; border-bottom: 0; display: flex; flex-direction: column; gap: 4px; }
.row { display: flex; height: 23px; flex: none; }
.r2 { padding-left: 1px; }
.r3 { padding-left: 3px; }
.tbar { display: flex; align-items: center; height: 23px; border: 1px solid #333; background: #f0f0f0; flex: none; }
.tbar + .tbar { margin-left: 1px; }
.tbar.gap2 { margin-left: 2px; }
.tbar.gap3 { margin-left: 3px; }
.tbar.grow { flex: 1; border-right: 0; }
.first { border-left-width: 1px; }
.grip {
  width: 6px; height: 21px; flex: none;
  background: #5e5e5e radial-gradient(circle, #1c1c1c 0.7px, transparent 0.8px) 0 0 / 3px 3px;
}
.grip.wide { width: 8px; }
.grip.wide2 { width: 8px; }
.sep { width: 1px; height: 18px; margin: 0 2.5px; background: #9a9a9a; flex: none; }
.ic { width: 23px; height: 21px; flex: none; fill: none; stroke: #454545; stroke-width: 1; stroke-linejoin: round; stroke-linecap: round; }
.ic16 { width: 16px; height: 21px; flex: none; fill: none; stroke: #4a4a4a; stroke-width: 1; }
.combo { display: flex; align-items: center; height: 21px; background: #e1e1e1; border-left: 1px solid #bdbdbd; border-right: 1px solid #bdbdbd; font-size: 15.5px; flex: none; padding-right: 6px; color: #111; }
.w119 { width: 119px; }
.w118 { width: 118px; }
.w173 { width: 173px; }
.w150 { width: 150px; }
.w158 { width: 158px; }
.w123 { width: 123.5px; }
.w114 { width: 114.5px; }
.left1 { margin-left: 1px; }
.ctr { flex: 1; text-align: center; white-space: nowrap; padding-right: 6px; }
.ctr.r0 { padding-right: 0; }
.lft { flex: 1; padding-left: 3px; white-space: nowrap; }
.wk { padding-left: 8px; }
.tight { padding-left: 3px; }
.chev { width: 12px; height: 8px; flex: none; fill: none; stroke: #666; stroke-width: 1; }
.layer { flex: 1; display: flex; align-items: center; height: 21px; padding-left: 3px; background: #e1e1e1; border-left: 1px solid #bdbdbd; }
.swatch { width: 10px; height: 10px; background: #00f000; border: 1px solid #000; margin: 0 6px 0 1px; flex: none; }
.layname { font-size: 15px; }
.props { background: #555; width: 581px; }
.mono { font-family: "Liberation Mono", "Noto Sans CJK SC", monospace; font-size: 13.3px; }
.sw2 { margin: 0 0 0 5px; }
.cjk15 { font-size: 15px; }
.lwline { width: 35px; height: 1px; background: #222; margin-left: 4px; flex: none; }
.pgap { height: 21px; flex: none; background: #e8e8e8; border-left: 2px solid #e8e8e8; border-right: 2px solid #e8e8e8; }
.g7 { width: 7px; background: #8a8a8a; }
.g8 { width: 8px; background: #8a8a8a; }
.dis { background: #c8c8c8; color: #8f8f8f; }
.pad9 { padding-left: 9px; }
.dd { width: 0; height: 0; margin: 0 3px; border: 4px solid transparent; border-top: 4px solid #333; border-bottom: 0; flex: none; margin-right: 4px; }
.dd.off { border-top-color: #aaa; }

/* icon paint */
.brn { fill: #8a5a2e; stroke: #5c3a1a; stroke-width: .5; }
.blu { stroke: #2d7fb8; }
.blu2 { stroke: #2d6f9c; stroke-width: 1.500; }
.bluf { fill: #2d7fb8; stroke: #1f5f8c; }
.bluc { fill: #8cc4ec; stroke: #2d7fb8; }
.fk { fill: #222; stroke: #222; }
.org { fill: #f0a020; stroke: #c06a10; }
.org2 { fill: #f3b070; stroke: #b0642a; }
.ylw { fill: #e8c050; stroke: #8a6a20; }
.ylwl { fill: #fbe9a0; stroke: #6a6a50; }
.ylws { fill: #f0c040; stroke: #d04020; }
.grn { fill: #3aa030; stroke: #206a20; }
.grnl { fill: #6ea83a; stroke: #3a7a20; }
.thk { stroke-width: 1.800; stroke: #222; }
.thk1 { stroke-width: 1.300; stroke: #222; fill: #fff; }
.thk2 { stroke-width: 2; stroke: #666; }
.gry { fill: #a9b0b8; stroke: #6a6a6a; }
.dash { stroke-dasharray: 2 2; stroke: #666; }
.dashb { stroke-dasharray: 2 2; stroke: #444; stroke-width: 2; }
.wb { fill: #fff; stroke: #333; }
.wbl { fill: #f4f6f8; stroke: #3b4a56; }
.hat { fill: #b8b8b8; stroke: #666; }
.grd { fill: #8a8a8a; stroke: #555; }
.hd { fill: #b4bcc4; stroke: #444; }
.fldr { fill: #dfe6ec; stroke: #3b4a56; }
.slate { fill: #5a6a7a; stroke: #333; }
.pale { fill: #eceff2; stroke: #b0b0b0; }
.lkb { fill: #a8d8f0; stroke: #2d6f9c; }
.big { font: 700 22px "Noto Sans", sans-serif; fill: #333; stroke: none; }
.big.dk { font-size: 20px; }
.mid { font: 700 11px "Noto Sans", sans-serif; fill: #333; stroke: none; }
.tiny { font: 700 8px "Noto Sans", sans-serif; fill: #222; stroke: none; }
.q { font: 700 15px "Noto Sans", sans-serif; fill: #222; stroke: none; }

/* canvas */
.canvas { position: relative; flex: 1; min-height: 0; margin-left: -1px; border-left: 2px solid #8c8c8c; border-top: 1px solid #a2a2a2; background: #212830; overflow: hidden; }
.viewlabel { position: absolute; left: 5px; top: 5px; font-size: 13px; line-height: 18px; color: #0c0f12; font-family: "Liberation Sans", "Noto Sans CJK SC", sans-serif; }
.drawing { position: absolute; left: 0; top: 0; width: 1744px; height: 732px; }
.red1 { fill: none; stroke: #d90000; stroke-width: 1; }
.hatch { fill: none; stroke: #7a7a7a; stroke-width: 1; }
.wht { fill: none; stroke: #fff; stroke-width: 1; }
.wht3 { fill: none; stroke: #fff; stroke-width: 3; }
.wht-mask { fill: none; stroke: #212830; stroke-width: 1; }
.col { fill: none; stroke: #8a8a8a; stroke-width: 1; }
.grn-l { fill: none; stroke: #00e000; stroke-width: 1; }
.dots { fill: none; stroke: #00e000; stroke-width: 3; stroke-linecap: round; }
.strip-w { fill: #e8e8e8; }
.strip-m { fill: #c020c0; }
.lab text { fill: #00f000; font: 700 12px "Noto Sans CJK SC", sans-serif; }
.lab .l14 { font-size: 14px; }
.lab .s { font-size: 9px; }
.bigtitle { fill: #fff; font: 700 32px "Noto Sans CJK SC", sans-serif; }
.tb-w { fill: #fff; }
.tb-c { fill: #212830; }
.tb-r { fill: none; stroke: #f00000; stroke-width: 3; }
.tb-d { fill: none; stroke: #a01c1c; stroke-width: 2; }
.tb-t text { fill: #00e000; font: 700 24px "Noto Sans CJK SC", sans-serif; text-anchor: middle; }
.tb-y { fill: #f0f000; font: 400 30px "Liberation Sans", sans-serif; text-anchor: middle; }
.ucs { fill: none; stroke: #fff; stroke-width: 1; }
.ring { fill: none; stroke: #3e454d; stroke-width: 14; }
.cube { fill: #c9c9c9; }
.west { fill: #9aa0a6; font: 17px "Noto Sans CJK SC", sans-serif; }
.wcs { fill: #b4b8bc; }

/* dialog */
.dialog { position: absolute; z-index: 1; left: 848px; top: 42px; width: 756px; height: 485px; background: #f0f0f0; font: 15px/20px "Liberation Mono", "Noto Sans CJK SC", monospace; color: #1c1c1c; display: flex; flex-direction: column; }
.dlg-title { height: 37px; background: #fff; display: flex; align-items: center; padding-left: 9px; flex: none; }
.dlg-logo { width: 20px; height: 20px; flex: none; }
.dlg-name { margin: -2px 0 0 5px; font-size: 15px; flex: 1; font-family: "Noto Sans CJK SC", sans-serif; }
.dlg-x { width: 14px; height: 14px; margin-right: 14px; fill: none; stroke: #222; stroke-width: 1; }
.dlg-body { flex: 1; padding: 12px 11px 0 10px; display: flex; flex-direction: column; }
.top { display: flex; height: 54px; flex: none; }
.group { position: relative; border: 1px solid #dcdcdc; flex: none; }
.legend { position: absolute; left: 8px; top: -10px; background: #f0f0f0; padding: 0 1px; line-height: 20px; white-space: nowrap; }
.filter { width: 499px; height: 47px; margin-top: 3px; display: flex; align-items: center; padding: 0 0 0 9px; }
.select { width: 282px; height: 24px; background: #e1e1e1; border: 1px solid #adadad; display: flex; align-items: center; justify-content: space-between; padding: 0 5px 0 4px; margin-top: 2px; }
.select span { padding-top: 2px; }
.check { width: 16px; height: 16px; background: #fff; border: 1px solid #333; display: block; flex: none; margin-left: 18px; margin-top: 2px; }
.check svg { display: block; width: 14px; height: 14px; fill: none; stroke: #333; stroke-width: 1.300; }
.chk-label { margin: 4px 0 0 5px; white-space: nowrap; }
.btn-grid { display: grid; grid-template-columns: 106px 106px; grid-auto-rows: 24px; gap: 6px; margin-left: 18px; }
.btn { font: inherit; color: inherit; background: #e1e1e1; border: 1px solid #adadad; padding: 2px 0 0; white-space: nowrap; }
.btn.focus { border: 2px solid #0078d7; padding: 1px; }
.btn.focus span { display: block; height: 100%; border: 1px dotted #111; line-height: 17px; }
.current { height: 20px; margin-top: 9px; flex: none; border: 1px solid #fff; border-top-color: #a0a0a0; border-left-color: #a0a0a0; display: flex; align-items: center; }
.cj { white-space: nowrap; }
.cv { margin-left: 15px; font-size: 13.3px; }
.list { height: 180px; margin-top: 8px; flex: none; background: #fff; border: 1px solid #828790; display: flex; overflow: hidden; }
.list-main { flex: 1; overflow: hidden; font-size: 13.3px; }
.lhead { height: 26px; display: flex; font-size: 15px; line-height: 26px; }
.lhead span { height: 24px; border-right: 1px solid #e5e5e5; padding-left: 7px; flex: none; }
.h1 { width: 150px; }
.h2 { width: 100px; }
.h3 { width: 250px; padding-left: 7px; }
.h4 { border: 0; }
.lhead span.h4 { border: 0; }
.lrow { height: 20px; display: flex; align-items: center; white-space: nowrap; }
.n { width: 158px; padding-left: 1px; flex: none; }
.ls { width: 87px; height: 4px; flex: none; fill: none; stroke: #111; stroke-width: 1; }
.d3 { stroke-dasharray: 22 14; }
.d7 { stroke-dasharray: 1 21 22 22; }
.d4 { stroke-dasharray: 22 3 1 3; }
.d5 { stroke-dasharray: 22 2 1 1 1 2; }
.dc { stroke-dasharray: 22 3 3 3; }
.d { width: 251px; margin-left: 6px; overflow: hidden; flex: none; }
.vscroll { width: 19px; background: #f0f0f0; display: flex; flex-direction: column; align-items: center; flex: none; margin: 1px 1px 1px 0; }
.vs-a { width: 12px; height: 8px; flex: none; margin: 9px 0 5px; fill: none; stroke: #444; stroke-width: 1.600; }
.vs-a.end { margin: auto 0 7px; }
.vs-t { width: 100%; height: 63px; background: #cdcdcd; flex: none; }
.details { height: 109px; margin-top: 13px; display: flex; }
.d-left { width: 406px; padding: 7px 0 0 19px; }
.f { display: flex; height: 25px; margin-bottom: 10px; align-items: center; }
.f label { width: 109px; white-space: nowrap; }
.f-a label { padding-top: 16px; }
.f-b label { padding-top: 12px; }
.off { color: #a0a0a0; }
.inp-dis { width: 277px; height: 100%; border: 1px solid #cfcfcf; background: #f0f0f0; display: block; }
.chk-row { display: flex; align-items: center; white-space: nowrap; margin-top: 6px; padding-left: 4px; }
.chk-row .check { margin: 0 5px 0 0; background: #fff; }
.d-right { width: 285px; margin-left: 30px; padding-top: 10px; display: flex; flex-direction: column; gap: 10px; }
.f2 { display: flex; align-items: center; height: 23px; white-space: nowrap; }
.f2 label { width: 176px; flex: none; padding-top: 10px; }
.val { width: 109px; height: 100%; background: #fff; border: 1px solid #7a7a7a; font-size: 13.3px; padding-left: 2px; line-height: 18px; flex: none; display: flex; align-items: flex-start; }
.val.dis { background: #cccccc; border-color: #c4c4c4; color: #8c8c8c; align-items: center; justify-content: space-between; padding: 0 5px; font-size: 15px; }
.foot { display: flex; justify-content: flex-end; gap: 8px; margin-top: 12px; height: 24px; flex: none; padding-right: 1px; }
.foot .btn { width: 98px; }

/* sheet tabs */
.tabbar { height: 16px; flex: none; margin-left: -12px; background: #f0f0f0; display: flex; align-items: stretch; position: relative; overflow: hidden; font-size: 15px; line-height: 18px; white-space: nowrap; }
.nav { display: flex; margin-left: 14px; flex: none; width: 72px; }
.nb { width: 18px; height: 16px; border-right: 1px solid #aaa; flex: none; }
.nb-d { fill: #777; }
.nb-k { fill: #333; }
.mtab { padding: 0 14px; color: #111; flex: none; }
.mtab.active { width: 58px; padding: 0 13px; margin-left: 1px; background: #212830; color: #fff; clip-path: polygon(0 0, 100% 0, 92% 100%, 8% 100%); }
.mtab:not(.active) { margin-left: -7px; font-size: 14.5px; }
.tabslash { width: 1px; height: 18px; background: #777; transform: rotate(20deg); margin-left: -3px; flex: none; }
.sb-l { margin-left: 1043px; font-size: 16px; line-height: 14px; flex: none; }
.sb-t { width: 21px; height: 16px; margin-left: 418px; background: #cdcdcd; flex: none; }

/* overlay marks and watermark */
.overlay { position: absolute; z-index: 2; left: 0; top: 0; width: 1757px; height: 884px; pointer-events: none; }
.mark-f { fill: #f5261a; }
.mark-s { fill: none; stroke: #f5261a; stroke-width: 4.500; }
.hand { fill: #f5261a; font: 54px "Noto Sans", sans-serif; }
.hand-c { fill: #f5261a; font: 28px "Noto Sans CJK SC", sans-serif; }
.note { fill: #f02a1e; font: 33px "Noto Sans CJK SC", sans-serif; }
.note2 { fill: #f5261a; font: 400 47px "Liberation Sans", sans-serif; }
.note3 { fill: #f5261a; font: 30px "Noto Sans CJK SC", sans-serif; }
.wm-a { fill: #2c7aa4; }
.wm-b { fill: #6d8a98; }
.wm-c { fill: #186a96; }
.wm-d { fill: #232c33; }
.wm-e { fill: #4d86a6; }
.wm-f { fill: #3c7fa8; }
.wm-g { fill: #16628e; }
.wm-t { fill: #858a8f; font: 700 36px "Liberation Sans", "Noto Sans CJK SC", sans-serif; }
.wm-u { fill: #85898e; font: 700 11px "Liberation Sans", sans-serif; }
```
